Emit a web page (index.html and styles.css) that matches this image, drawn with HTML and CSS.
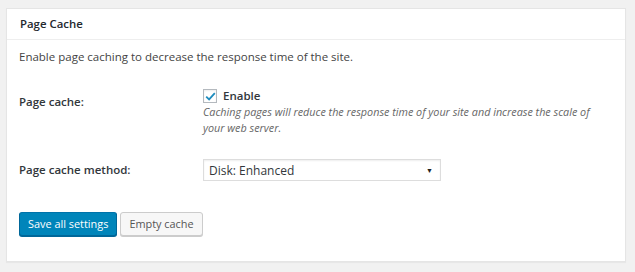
FILE: index.html
```html
<!doctype html>
<html lang="en">

<head>
    <meta charset="UTF-8">
    <title>Page Cache</title>
    <link rel="stylesheet" href="styles.css">
</head>

<body>
    <div class="postbox">
        <h3 class="hndle">Page Cache</h3>
        <div class="inside">
            <p class="intro">Enable page caching to decrease the response time of the site.</p>

            <div class="form-row row-cache">
                <div class="row-label">Page cache:</div>
                <div class="row-field">
                    <label class="check"><span class="box"><svg width="11" height="9" viewBox="0 0 11 9"><path d="M1.2 4.6 L4.1 7.4 L9.8 1.2" fill="none" stroke="#1e8cbe" stroke-width="1.8"/></svg></span> Enable</label>
                    <p class="hint">Caching pages will reduce the response time of your site and increase the scale of your web server.</p>
                </div>
            </div>

            <div class="form-row row-method">
                <div class="row-label">Page cache method:</div>
                <div class="row-field">
                    <div class="select">
                        <span>Disk: Enhanced</span>
                        <span class="arrow">&#9660;</span>
                    </div>
                </div>
            </div>

            <div class="buttons">
                <button class="btn btn-primary">Save all settings</button>
                <button class="btn">Empty cache</button>
            </div>
        </div>
    </div>
</body>

</html>
```

FILE: styles.css
```css
body {
    background-color: #f1f1f1;
    font-family: 'Open Sans', sans-serif;
    font-size: 11.5px;
    color: #444;
    margin: 0;
    padding: 8px 9px 10px 6px;
}

.postbox {
    background-color: #fff;
    border: 1px solid #e5e5e5;
    box-shadow: 0 1px 1px rgba(0, 0, 0, 0.04);
    height: 252px;
}

.hndle {
    margin: 0;
    font-size: 11.4px;
    font-weight: 600;
    color: #23282d;
    line-height: 16px;
    padding: 7px 13px 7px 13px;
    border-bottom: 1px solid #eee;
}

.inside {
    padding: 0 12px;
}

.intro {
    margin: 9px 0 0 0;
    line-height: 16px;
}

.form-row {
    display: flex;
}

.row-label {
    width: 184px;
    font-weight: 600;
    color: #32373c;
    line-height: 16px;
}

.row-cache {
    margin-top: 23px;
}

.row-cache .row-label {
    padding-top: 6px;
}

.check {
    display: flex;
    align-items: center;
    font-weight: 600;
    color: #32373c;
    line-height: 16px;
    gap: 6px;
}

.box {
    width: 14px;
    height: 14px;
    border: 1px solid #b4b9be;
    box-sizing: border-box;
    display: flex;
    align-items: center;
    justify-content: center;
    box-shadow: inset 0 1px 2px rgba(0, 0, 0, 0.07);
}

.box svg {
    display: block;
}

.hint {
    margin: 0;
    font-style: italic;
    font-size: 10.8px;
    line-height: 16px;
    color: #666;
    width: 400px;
}

.row-method {
    margin-top: 23px;
    align-items: center;
}

.select {
    width: 238px;
    height: 22px;
    box-sizing: border-box;
    border: 1px solid #ddd;
    display: flex;
    align-items: center;
    justify-content: space-between;
    padding: 0 7px 0 5px;
    font-size: 12px;
    color: #32373c;
    box-shadow: inset 0 1px 2px rgba(0, 0, 0, 0.07);
}

.arrow {
    font-size: 7px;
    color: #222;
}

.buttons {
    display: flex;
    gap: 3px;
    margin-top: 31px;
}

.btn {
    font-family: 'Open Sans', sans-serif;
    font-size: 10.9px;
    height: 24px;
    line-height: 22px;
    padding: 0 8px;
    border: 1px solid #ccc;
    border-radius: 3px;
    background-color: #f7f7f7;
    color: #555;
    box-shadow: 0 1px 0 #ccc;
    cursor: pointer;
}

.btn-primary {
    background-color: #0085ba;
    border-color: #0073aa #006799 #006799;
    color: #fff;
    box-shadow: 0 1px 0 #006799;
}
```
